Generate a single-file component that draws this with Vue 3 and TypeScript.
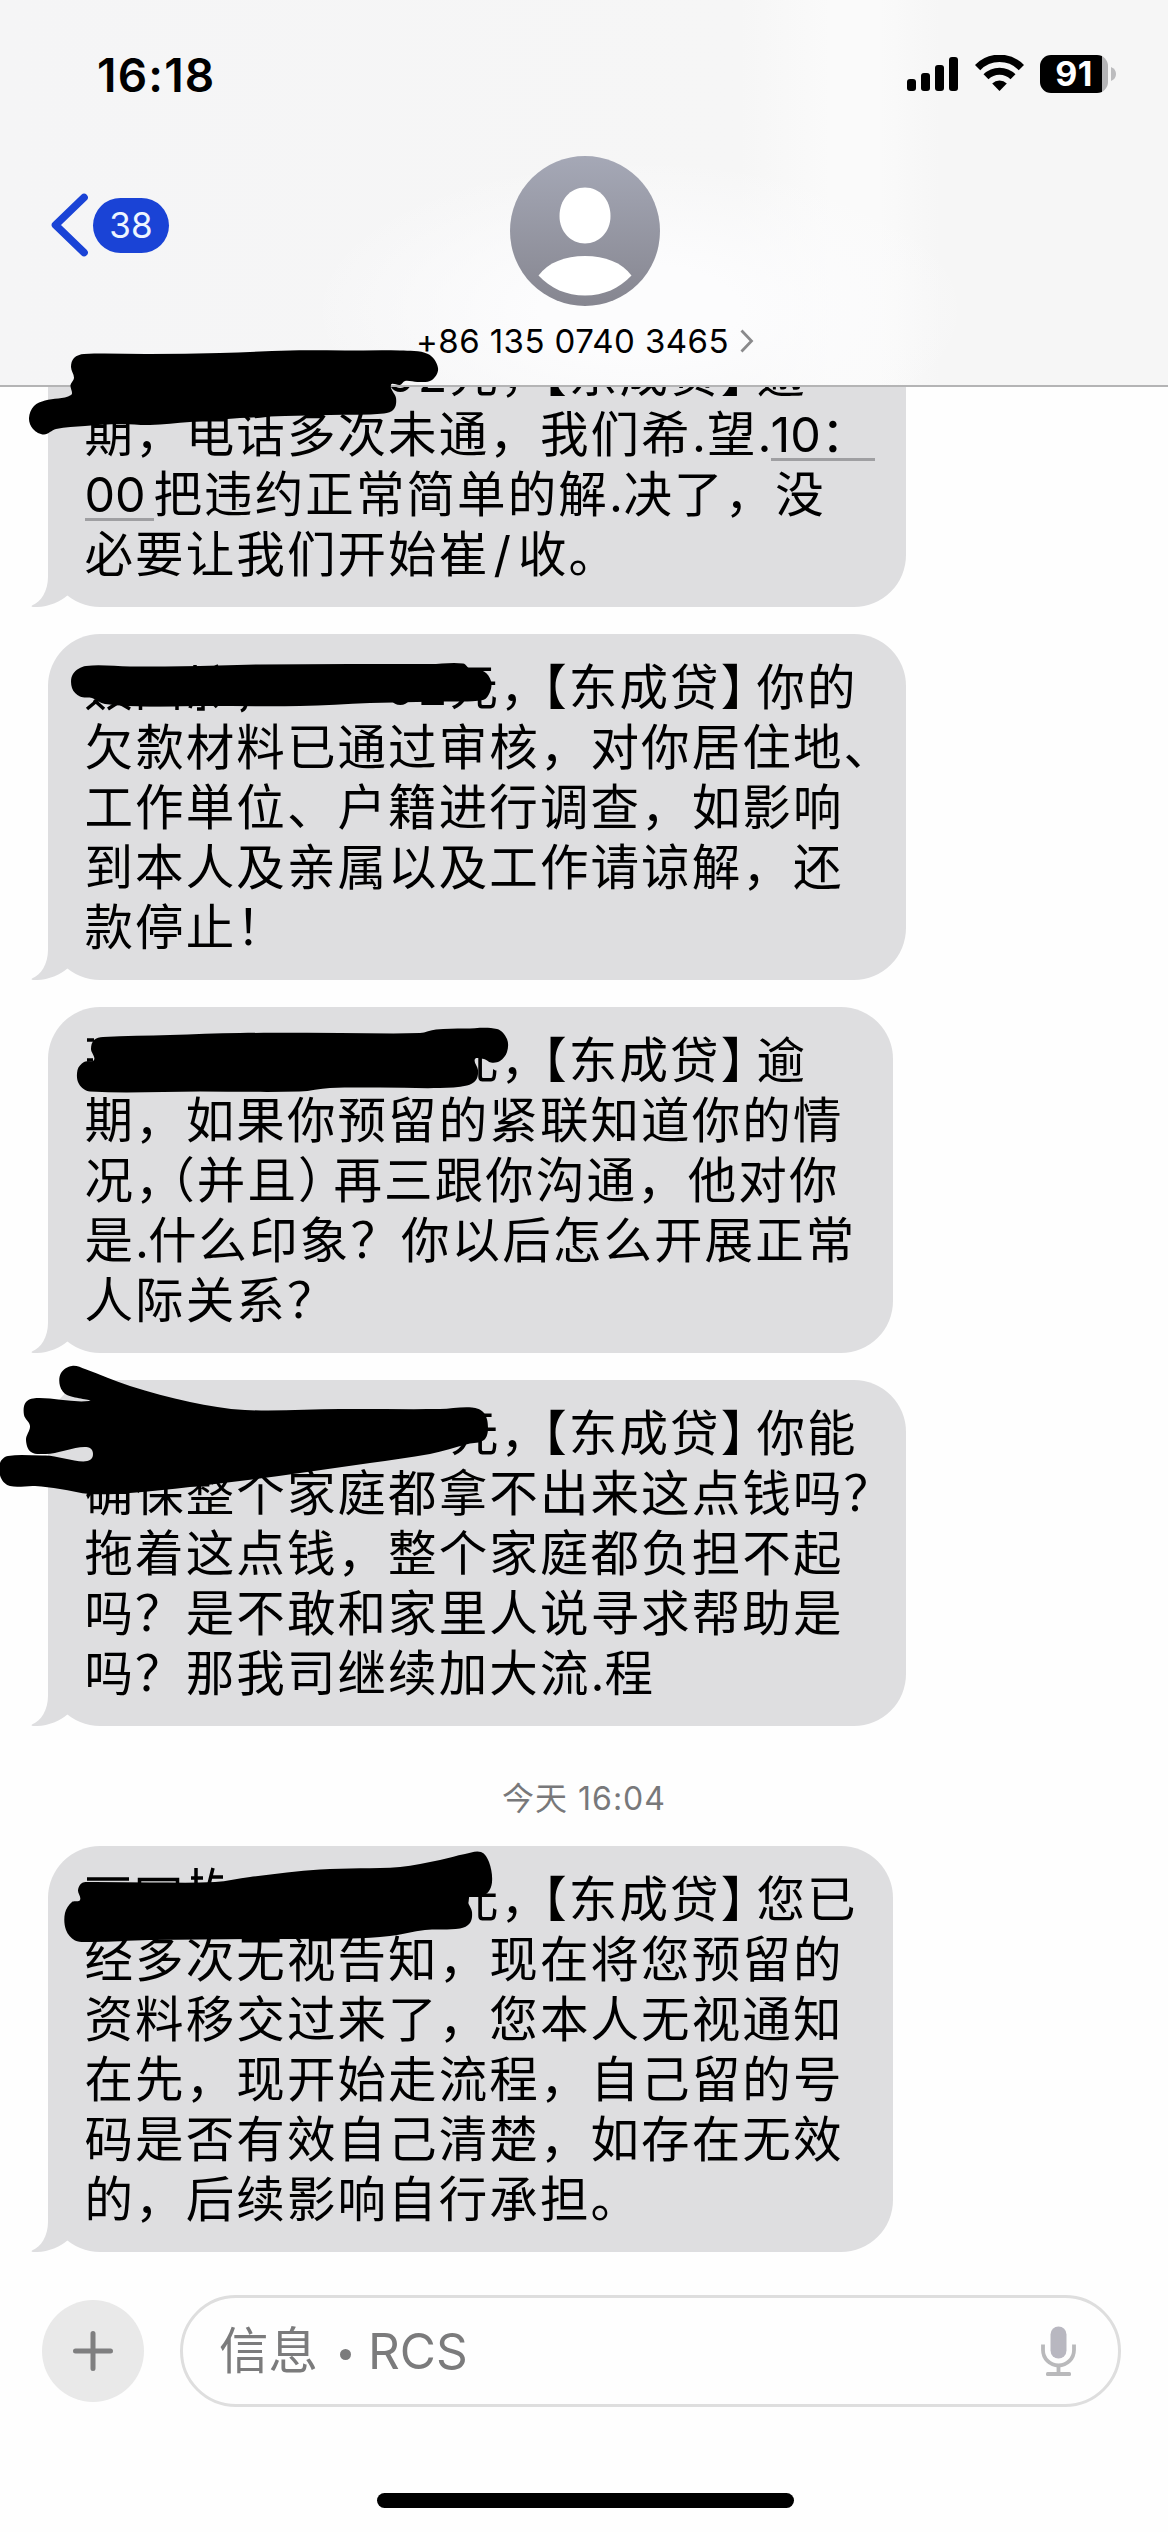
<script setup lang="ts">
interface Segment {
  text: string
  width?: number
  kind?: 'link' | 'half'
}
interface Message {
  id: number
  width: number
  before?: string
  lines: Segment[][]
}
type Point = [number, number]

const s = (text: string, width?: number, kind?: Segment['kind']): Segment => ({ text, width, kind })

// First row of every message: the masked part, then the amount and the sender tag.
const lead = (rest: string, amount = '元，'): Segment[] => {
  const extra = amount === '元，' ? 0 : 65
  return [s('', 365.5 - extra), s(amount, 92.5 + extra, 'half'), s('【东成贷】', 214, 'half'), s(rest)]
}

const messages: Message[] = [
  {
    id: 1,
    width: 858,
    lines: [
      lead('逾', '02元，'),
      [s('期，电话多次未通，我们希', 607.5), s('.', 15), s('望', 50.5), s('.', 13), s('10：', 104, 'link')],
      [s('00', 69, 'link'), s('把违约正常简单的解', 455.5), s('.', 14.5), s('决了，没')],
      [s('必要让我们开始崔', 409), s('/', 24.5), s('收。')],
    ],
  },
  {
    id: 2,
    width: 858,
    lines: [
      lead('你的', '02元，'),
      [s('欠歀材料已通过审核，对你居住地、')],
      [s('工作単位、户籍进行调查，如影响')],
      [s('到本人及亲属以及工作请谅解，还')],
      [s('款停止！')],
    ],
  },
  {
    id: 3,
    width: 845,
    lines: [
      lead('逾'),
      [s('期，如果你预留的紧联知道你的情')],
      [s('况，', 86, 'half'), s('（并且）', 163, 'half'), s('再三跟你沟通，他对你')],
      [s('是', 50.5), s('.', 13), s('什么印象？你以后怎么开展正常')],
      [s('人际关系？')],
    ],
  },
  {
    id: 4,
    width: 858,
    lines: [
      lead('你能'),
      [s('确保整个家庭都拿不出来这点钱吗？')],
      [s('拖着这点钱，整个家庭都负担不起')],
      [s('吗？是不敢和家里人说寻求帮助是')],
      [s('吗？那我司继续加大流', 506), s('.', 14), s('程')],
    ],
  },
  {
    id: 5,
    width: 845,
    before: '今天 16:04',
    lines: [
      lead('您已'),
      [s('经多次无视告知，现在将您预留的')],
      [s('资料移交过来了，您本人无视通知')],
      [s('在先，现开始走流程，自己留的号')],
      [s('码是否有效自己清楚，如存在无效')],
      [s('的，后续影响自行承担。')],
    ],
  },
]

// Marker strokes over the private parts, as closed outlines in page coordinates.
const marks: Point[][] = [
  [
    [84, 354], [150, 354], [220, 353], [290, 350.5], [345, 350.5], [400, 350.5], [428, 354], [438, 368], [432, 380],
    [418, 382], [405, 381], [400, 385], [391, 385], [396, 398], [394, 409], [384, 413.5], [330, 415], [285, 416],
    [240, 418], [190, 422], [150, 425], [120, 424], [85, 426], [56, 429], [44, 434.5], [33, 429], [29, 418], [34, 406],
    [45, 400.5], [71, 395], [70.5, 385], [74, 378], [71, 367], [74, 358],
  ],
  [
    [86, 666], [130, 666.5], [200, 666], [260, 664.5], [350, 664], [430, 664], [463, 663.5], [471, 670], [484, 671.5],
    [491, 681], [490, 692], [483, 700], [440, 701.5], [370, 703], [300, 706], [200, 706], [150, 706.5], [105, 704],
    [92, 698], [80, 696.5], [72, 688], [73, 674],
  ],
  [
    [103, 1037], [170, 1035], [240, 1033], [340, 1033], [420, 1033], [436, 1029.5], [465, 1028.5], [497, 1029],
    [507, 1039], [507, 1052], [500, 1061], [491, 1062.5], [484, 1059], [475, 1059], [478, 1070], [476, 1080], [467, 1085.5],
    [440, 1088], [380, 1087.5], [330, 1088], [300, 1091.5], [200, 1091.5], [90, 1091.5], [79, 1084], [77.5, 1070],
    [84, 1062], [94, 1060], [91, 1049], [94, 1040],
  ],
  [
    [72, 1366], [85, 1369], [130, 1386], [190, 1402], [245, 1410], [340, 1409], [440, 1409], [472, 1407.5],
    [484, 1413], [488, 1428], [484, 1440], [468, 1444], [430, 1454], [370, 1463], [300, 1473], [240, 1481], [190, 1487],
    [130, 1493], [90, 1494], [60, 1489], [35, 1486], [10, 1486], [1, 1478], [0, 1463], [8, 1456], [45, 1455.5],
    [93, 1454], [45, 1454], [31, 1452], [26, 1440], [30, 1426], [24, 1415], [26, 1402], [38, 1398], [89, 1401], [67, 1395],
    [60, 1386], [61, 1373],
  ],
  [
    [90, 1882], [150, 1882.5], [215, 1882], [250, 1877], [320, 1869.5], [400, 1867], [440, 1860], [465, 1854],
    [481, 1852], [489, 1862], [492, 1882], [486, 1894], [468, 1897], [472, 1912], [470, 1923], [460, 1928.5],
    [425, 1930], [390, 1936], [350, 1938.5], [250, 1939], [150, 1940], [90, 1942], [75, 1940.5], [66, 1930], [65, 1913],
    [72, 1902], [80, 1900], [78, 1890], [82, 1883],
  ],
]

// Closed Catmull-Rom spline through the points.
function outline(points: Point[]): string {
  const n = points.length
  let d = `M${points[0][0]},${points[0][1]}`
  for (let i = 0; i < n; i++) {
    const a = points[(i + n - 1) % n]
    const b = points[i]
    const c = points[(i + 1) % n]
    const e = points[(i + 2) % n]
    const len = Math.hypot(c[0] - b[0], c[1] - b[1])
    const la = Math.hypot(c[0] - a[0], c[1] - a[1]) || 1
    const lb = Math.hypot(e[0] - b[0], e[1] - b[1]) || 1
    const k = len / 3
    const x1 = b[0] + ((c[0] - a[0]) / la) * k
    const y1 = b[1] + ((c[1] - a[1]) / la) * k
    const x2 = c[0] - ((e[0] - b[0]) / lb) * k
    const y2 = c[1] - ((e[1] - b[1]) / lb) * k
    d += ` C${x1.toFixed(1)},${y1.toFixed(1)} ${x2.toFixed(1)},${y2.toFixed(1)} ${c[0]},${c[1]}`
  }
  return d + 'Z'
}
const outlines = marks.map(outline)
</script>

<template>
  <div class="phone">
    <header class="header">
      <div class="status">
        <span class="clock">16:18</span>
        <div class="indicators">
          <svg class="signal" width="51" height="35" viewBox="0 0 51 35">
            <rect x="0" y="23" width="9" height="12" rx="3" />
            <rect x="14" y="17" width="9" height="18" rx="3" />
            <rect x="28" y="9" width="9" height="26" rx="3" />
            <rect x="42" y="1" width="9" height="34" rx="3" />
          </svg>
          <svg class="wifi" width="49" height="36" viewBox="0 0 49 36">
            <path d="M2.600 12.600 A30.500 30.500 0 0 1 46.400 12.600" fill="none" stroke="#000" stroke-width="7.4" />
            <path d="M11 21.800 A19 19 0 0 1 38 21.800" fill="none" stroke="#000" stroke-width="7" />
            <path d="M24.500 36 L17.200 28.600 A10.400 10.400 0 0 1 31.800 28.600 Z" />
          </svg>
          <div class="battery"><span>91</span></div>
          <svg class="nub" width="5" height="14" viewBox="0 0 5 14"><path d="M0 0 Q5 2 5 7 Q5 12 0 14Z" fill="#bcbcbe" /></svg>
        </div>
      </div>
      <div class="nav">
        <div class="back">
          <svg width="37" height="64" viewBox="0 0 37 64">
            <path d="M33 4.5 L4.5 32 L33 59.5" fill="none" stroke="#1a43d6" stroke-width="7.6" stroke-linecap="round" stroke-linejoin="round" />
          </svg>
          <span class="badge">38</span>
        </div>
        <div class="contact">
          <svg class="avatar" width="150" height="150" viewBox="0 0 150 150">
            <defs>
              <linearGradient id="face" x1="0" y1="0" x2="0" y2="1">
                <stop offset="0" stop-color="#a5a8b6" />
                <stop offset="1" stop-color="#868690" />
              </linearGradient>
            </defs>
            <circle cx="75" cy="75" r="75" fill="url(#face)" />
            <path d="M75 31.5 C90 31.5 100.500 44 100.500 60 C100.500 76 89 87.500 75 87.500 C61 87.500 49.500 76 49.500 60 C49.500 44 60 31.500 75 31.500Z" fill="#fff" />
            <path d="M28.500 119.500 C38 106.500 55 100 75 100 C95 100 112 106.500 121.500 119.500 C109.500 132.500 93.500 139.500 75 139.500 C56.500 139.500 40.500 132.500 28.500 119.500Z" fill="#fff" />
          </svg>
          <div class="name">
            <span>+86 135 0740 3465</span>
            <svg width="14" height="24" viewBox="0 0 14 24">
              <path d="M1.500 1.500 L11.500 12 L1.500 22.500" fill="none" stroke="#8a8a8c" stroke-width="2.800" />
            </svg>
          </div>
        </div>
      </div>
    </header>

    <main class="thread">
      <template v-for="m in messages" :key="m.id">
        <div v-if="m.before" class="stamp">{{ m.before }}</div>
        <article class="bubble" :style="{ width: m.width + 'px' }">
          <p v-for="(line, i) in m.lines" :key="i" class="line">
            <span
              v-for="(seg, j) in line"
              :key="j"
              class="seg"
              :class="seg.kind"
              :style="seg.width ? { width: seg.width + 'px' } : undefined"
            >{{ seg.text }}</span>
          </p>
          <svg class="tail" width="40" height="60" viewBox="0 0 40 60">
            <path d="M17 0 L17 30 C17 44 10 55 1 58.500 C-0.500 60 2 60 6 60 C18 59.500 29 55 37 48 L37 0Z" fill="#dedee0" />
          </svg>
        </article>
      </template>
    </main>

    <footer class="composer">
      <button class="add" type="button" aria-label="add">
        <svg width="40" height="40" viewBox="0 0 40 40">
          <path d="M20 2.500 V37.500 M2.500 20 H37.500" stroke="#7f7f80" stroke-width="5" stroke-linecap="round" />
        </svg>
      </button>
      <div class="field">
        <span class="hint">信息<i class="dot"></i>RCS</span>
        <svg width="35" height="51" viewBox="0 0 35 51">
          <rect x="9.500" y="0.500" width="16" height="32" rx="8" fill="#b8b7c0" />
          <path d="M2 18.500 V24 A15.500 15.500 0 0 0 33 24 V18.500" fill="none" stroke="#b9b9bb" stroke-width="3.800" />
          <path d="M17.500 39 V47" stroke="#b9b9bb" stroke-width="3.800" />
          <rect x="5" y="46" width="25" height="4" rx="1.500" fill="#b9b9bb" />
        </svg>
      </div>
    </footer>
    <div class="home"></div>

    <svg class="marks" width="1168" height="2532" viewBox="0 0 1168 2532">
      <path
        class="ink"
        d="M87 709 L99 699 M94 700 L104 709 M108 709 L122 700 M118 702 L130 709 M139 704.500 H178 M140.500 700 V710 M177 700 V710 M193 700 L190 708 M203 700 V709 H197 M212 702 L217 707 M241 711 Q246 709 246 703 M195 665 V670 M216 665 L218 670 M87 1040 H94 M87 1060 H93 M87 1879 H129 M139.500 1886 V1879.500 H177.500 V1886 M196 1868 V1886 M191 1878 H203 M213 1868 L209 1884 M210 1877 H223"
      />
      <path v-for="(d, i) in outlines" :key="i" :d="d" />
    </svg>
  </div>
</template>

<style>
body {
  margin: 0;
  background: #fefefe;
}
</style>

<style scoped>
.phone {
  position: relative;
  display: flex;
  flex-direction: column;
  width: 1168px;
  height: 2532px;
  overflow: hidden;
  background: #fefefe;
  color: #000;
  font-family: Inter, 'Noto Sans CJK SC', sans-serif;
  text-spacing-trim: space-all;
}
.header {
  position: relative;
  z-index: 1;
  flex: none;
  box-sizing: border-box;
  height: 387px;
  border-bottom: 2px solid #b4b4b5;
  background:
    radial-gradient(ellipse 330px 150px at 640px 310px, #fcfcfd 30%, rgba(252, 252, 253, 0) 100%),
    linear-gradient(90deg, #f5f5f6 0, #f6f6f6 740px, #fafafa 830px, #fafafa 880px, #f6f6f6 940px, #f6f6f6 100%);
}
.status {
  display: flex;
  justify-content: space-between;
  align-items: flex-start;
  height: 156px;
  box-sizing: border-box;
  padding: 55px 52px 0 97px;
}
.clock {
  font-size: 46px;
  font-weight: 600;
  line-height: 40px;
  letter-spacing: 1.2px;
}
.indicators {
  display: flex;
  align-items: flex-start;
}
.signal {
  margin-top: 1px;
}
.wifi {
  margin-left: 17px;
}
.battery {
  box-sizing: border-box;
  width: 68px;
  height: 38px;
  margin-left: 16px;
  border-radius: 11px;
  background: linear-gradient(90deg, #000 62px, #b4b4b6 62px);
  color: #fff;
  font-size: 34px;
  font-weight: 650;
  letter-spacing: 0.5px;
  line-height: 38px;
  text-align: center;
}
.nub {
  margin: 12px 0 0 3px;
}
.nav {
  display: grid;
  grid-template-columns: 1fr 400px 1fr;
}
.back {
  display: flex;
  align-items: center;
  height: 64px;
  margin: 37px 0 0 51px;
  gap: 5px;
}
.badge {
  width: 76px;
  height: 55px;
  border-radius: 27.5px;
  background: #1a43d6;
  color: #eef6ff;
  font-size: 35px;
  line-height: 55px;
  text-align: center;
}
.contact {
  display: flex;
  flex-direction: column;
  align-items: center;
  padding-left: 2px;
}
.name {
  display: flex;
  align-items: center;
  gap: 11px;
  height: 40px;
  margin-top: 15px;
  font-size: 33px;
  letter-spacing: 0.42px;
  white-space: nowrap;
}
.thread {
  flex: none;
  height: 1931px;
  margin-top: -66px;
  padding-left: 48px;
}
.bubble {
  position: relative;
  box-sizing: border-box;
  margin-bottom: 27px;
  padding: 24px 0 22px 36.5px;
  border-radius: 52px;
  background: #dedee0;
}
.line {
  display: flex;
  height: 60px;
  margin: 0;
  font-size: 48.5px;
  line-height: 60px;
  letter-spacing: 2.1px;
  white-space: nowrap;
}
.seg {
  flex: none;
}
.half {
  font-feature-settings: 'halt';
}
.link {
  background: linear-gradient(#9f9fa2, #9f9fa2) 0 53px / 100% 3px no-repeat;
  letter-spacing: 0;
}
.tail {
  position: absolute;
  left: -17px;
  bottom: 0;
}
.stamp {
  width: 1072px;
  height: 93px;
  box-sizing: border-box;
  padding-top: 24px;
  color: #78787a;
  font-size: 32px;
  letter-spacing: 1px;
  line-height: 44px;
  text-align: center;
}
.composer {
  display: flex;
  align-items: center;
  height: 112px;
  margin-top: 43px;
  padding-left: 42px;
}
.add {
  display: flex;
  align-items: center;
  justify-content: center;
  width: 102px;
  height: 102px;
  padding: 0;
  border: 0;
  border-radius: 50%;
  background: #e9e9e9;
}
.field {
  display: flex;
  align-items: center;
  justify-content: space-between;
  box-sizing: border-box;
  width: 941px;
  height: 112px;
  margin-left: 36px;
  padding: 0 42px 0 36px;
  border: 3px solid #dedede;
  border-radius: 56px;
}
.hint {
  display: flex;
  align-items: center;
  color: #7b7b7c;
  font-size: 49.5px;
  line-height: 60px;
}
.dot {
  width: 11px;
  height: 11px;
  margin: 6px 17px 0 22px;
  border-radius: 50%;
  background: #7b7b7c;
}
.home {
  width: 417px;
  height: 15px;
  margin: 86px 0 0 377px;
  border-radius: 8px;
  background: #000;
}
.marks {
  position: absolute;
  z-index: 2;
  top: 0;
  left: 0;
  pointer-events: none;
}
.ink {
  fill: none;
  stroke: #000;
  stroke-width: 3.5px;
}
</style>
